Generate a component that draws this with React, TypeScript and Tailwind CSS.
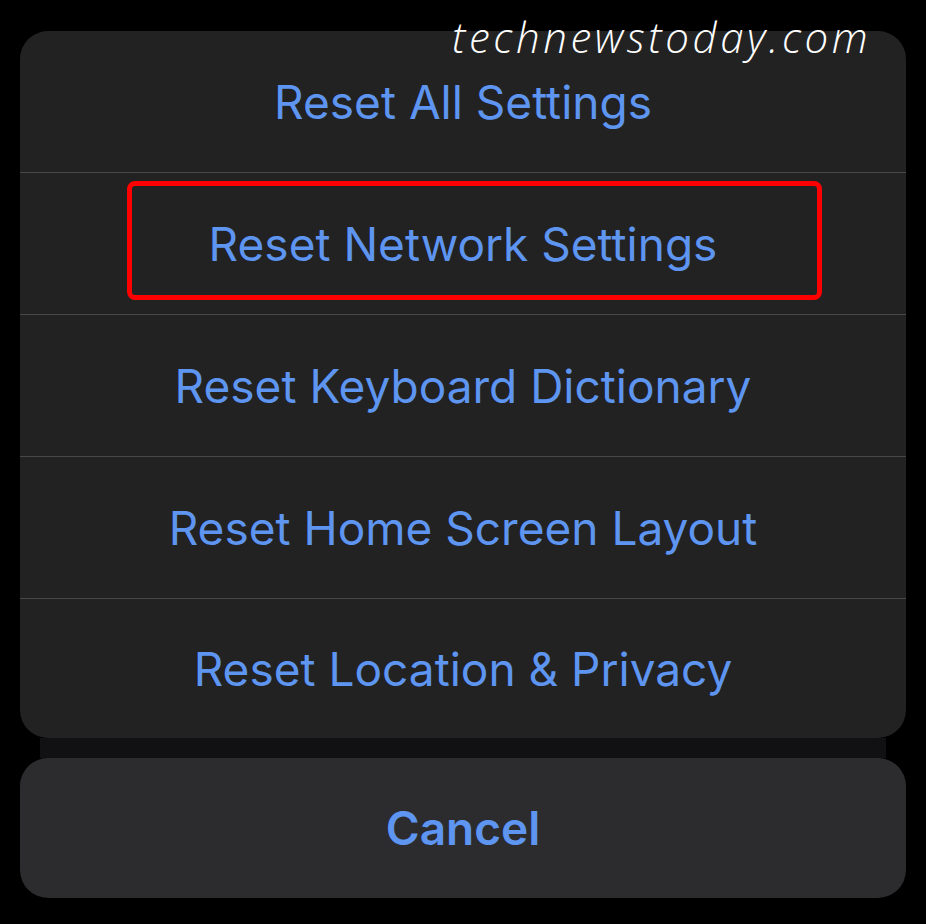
import React from 'react';

const options = [
	'Reset All Settings',
	'Reset Network Settings',
	'Reset Keyboard Dictionary',
	'Reset Home Screen Layout',
	'Reset Location & Privacy'
];

export default function App() {
	return (
		<div className="relative w-[926px] h-[924px] bg-black pt-[31px] overflow-hidden" style={{ fontFamily: 'Inter, "Noto Sans", sans-serif' }}>
			{/* Watermark */}
			<div
				className="absolute left-[452px] top-[12px] text-white italic font-light text-[42px] leading-[50px] tracking-[3.6px]"
				style={{ fontFamily: '"Open Sans", Lato, sans-serif' }}
			>
				technewstoday.com
			</div>

			{/* Action sheet */}
			<div className="mx-[20px] rounded-[28px] bg-[#222222] overflow-hidden">
				{options.map((label, i) => (
					<div
						key={label}
						className={`relative flex items-center justify-center ${i === 0 ? 'h-[141px]' : i === 4 ? 'h-[140px]' : 'h-[142px]'} ${i > 0 ? 'border-t border-[#48484a]' : ''}`}
					>
						{i === 1 && (
							<div className="absolute left-[107px] top-[8px] w-[695px] h-[119px] border-[5px] border-[#ff0000] rounded-[8px]" />
						)}
						<span className="text-[#5e95f0] text-[46px] leading-none">{label}</span>
					</div>
				))}
			</div>

			<div className="mx-[40px] h-[20px] bg-[#111113]" />

			{/* Cancel */}
			<div className="mx-[20px] h-[140px] rounded-[28px] bg-[#2c2c2e] flex items-center justify-center">
				<span className="text-[#5e95f0] text-[46px] font-semibold leading-none">Cancel</span>
			</div>
		</div>
	);
}
